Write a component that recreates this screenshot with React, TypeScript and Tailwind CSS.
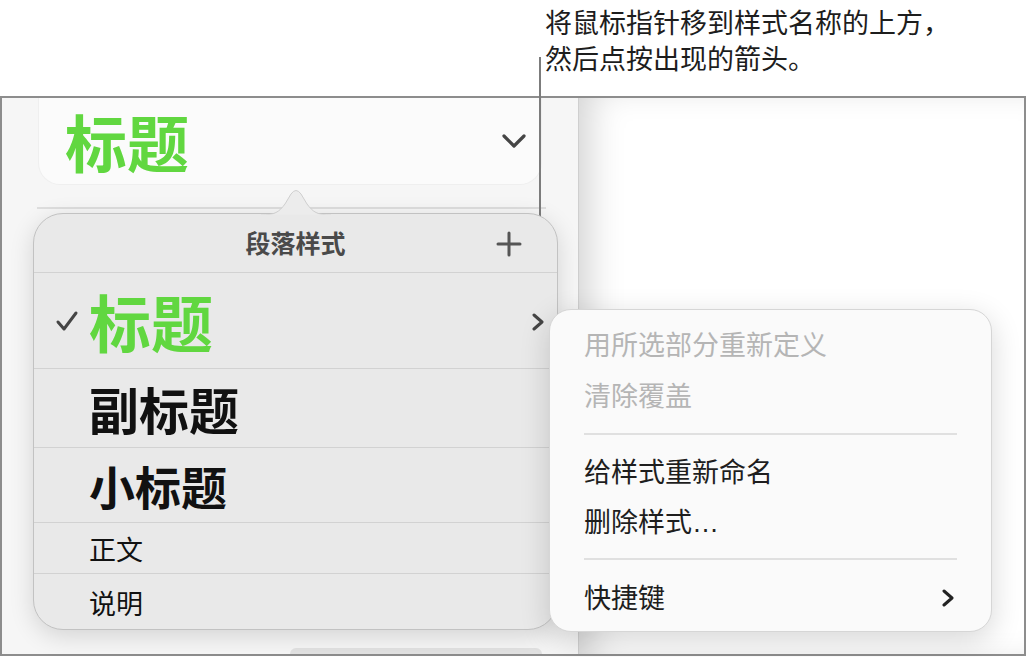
const font = "font-['Noto_Sans_CJK_SC','Noto_Sans',sans-serif]";

function ChevronDownIcon() {
  return (
    <svg width="26" height="16" viewBox="0 0 26 16" fill="none">
      <polyline points="3,3 13,13 23,3" stroke="#454545" strokeWidth="3.2" strokeLinecap="round" strokeLinejoin="round" />
    </svg>
  );
}

function ChevronRightIcon({ color = '#454545', w = 2.6 }: { color?: string; w?: number }) {
  return (
    <svg width="14" height="18" viewBox="0 0 14 18" fill="none">
      <polyline points="3,2 11,9 3,16" stroke={color} strokeWidth={w} strokeLinecap="round" strokeLinejoin="round" />
    </svg>
  );
}

function CheckIcon() {
  return (
    <svg width="24" height="22" viewBox="0 0 24 22" fill="none">
      <polyline points="3,12 9,19 21,3" stroke="#454545" strokeWidth="3" strokeLinecap="round" strokeLinejoin="round" />
    </svg>
  );
}

function PlusIcon() {
  return (
    <svg width="26" height="26" viewBox="0 0 26 26" fill="none">
      <line x1="13" y1="2" x2="13" y2="24" stroke="#555" strokeWidth="3" strokeLinecap="round" />
      <line x1="2" y1="13" x2="24" y2="13" stroke="#555" strokeWidth="3" strokeLinecap="round" />
    </svg>
  );
}

const styles = [
  { name: '副标题', cls: 'h-[79px] text-[50px] font-bold' },
  { name: '小标题', cls: 'h-[75px] text-[46px] font-bold' },
  { name: '正文', cls: 'h-[51px] text-[27px]' },
  { name: '说明', cls: 'h-[57px] text-[27px]' },
];

function MenuItem({ label, muted, chevron, ellipsis }: { label: string; muted?: boolean; chevron?: boolean; ellipsis?: boolean }) {
  return (
    <div className={`flex h-[51px] items-center justify-between pl-[34px] pr-[36px] text-[27px] ${muted ? 'text-[#b5b5b5]' : 'text-[#1e1e1e]'}`}>
      <span>
        {label}
        {ellipsis && <span className="font-['Liberation_Sans',sans-serif]">…</span>}
      </span>
      {chevron && <ChevronRightIcon color="#222" w={3} />}
    </div>
  );
}

export default function App() {
  return (
    <div className={`relative h-[657px] w-[1027px] overflow-hidden bg-white ${font}`}>
      {/* callout */}
      <div className="h-[96px] pl-[545px] pt-[4px] text-[27px] leading-[36px] text-[#1d1d1d]">
        <p>将鼠标指针移到样式名称的上方，</p>
        <p>然后点按出现的箭头。</p>
      </div>

      {/* app frame */}
      <div className="mr-[1px] flex h-[560px] overflow-hidden border-2 border-[#8d8d8d]">
        <aside className="flex w-[577px] flex-col border-r border-[#cfcfcf] bg-[#f6f6f6]">
          <div className="ml-[36px] mr-[36px] flex h-[87px] items-center justify-between rounded-b-[22px] border-x border-b border-[#efefef] bg-[#fbfbfb] pl-[26px] pr-[14px]">
            <span className="text-[62px] font-bold leading-none text-[#61d740]">标题</span>
            <ChevronDownIcon />
          </div>
          <div className="ml-[35px] mr-[32px] mt-[22px] h-[2px] bg-[#dedede]" />
          <div className="ml-[288px] mt-auto h-[6px] w-[252px] rounded-t-[8px] bg-[#e2e2e2]" />
        </aside>
        <main className="flex-1 bg-white shadow-[inset_24px_0_36px_-14px_rgba(0,0,0,0.18)]" />
      </div>

      {/* pointer line */}
      <div className="absolute left-[539px] top-[57px] h-[258px] w-[2px] bg-[#7c7c7c]" />

      {/* paragraph styles popover */}
      <div className="absolute left-[33px] top-[213px] h-[417px] w-[525px] rounded-[30px] border border-[#c2c2c2] bg-[#e9e9e9] shadow-[0_6px_24px_rgba(0,0,0,0.14)]">
        <svg className="absolute left-[227px] top-[-26px]" width="70" height="28" viewBox="0 0 70 28" fill="none">
          <path d="M0 27 C14 27 18 24 24 16 L30 6 Q35 -1 40 6 L46 16 C52 24 56 27 70 27" fill="#ececec" stroke="#cfcfcf" strokeWidth="1" />
          <rect x="0" y="26.5" width="70" height="2" fill="#e9e9e9" />
        </svg>
        <div className="relative flex h-[59px] items-center justify-center border-b border-[#d2d2d2]">
          <span className="text-[25px] font-semibold text-[#4a4a4a]">段落样式</span>
          <div className="absolute right-[35px] top-[17px]">
            <PlusIcon />
          </div>
        </div>
        <div className="flex h-[96px] items-center border-b border-[#d2d2d2] pl-[21px] pr-[12px]">
          <CheckIcon />
          <span className="ml-[10px] text-[62px] font-bold leading-none text-[#61d740]">标题</span>
          <div className="ml-auto mt-[2px]">
            <ChevronRightIcon w={3} />
          </div>
        </div>
        {styles.map((s, i) => (
          <div
            key={s.name}
            className={`flex items-center pl-[55px] leading-none text-[#111] ${s.cls} ${i < styles.length - 1 ? 'border-b border-[#d2d2d2]' : ''}`}
          >
            {s.name}
          </div>
        ))}
      </div>

      {/* style actions menu */}
      <div className="absolute left-[549px] top-[309px] h-[323px] w-[443px] rounded-[22px] border border-[#d6d6d6] bg-[#fafafa] pt-[9px] shadow-[0_8px_30px_rgba(0,0,0,0.16)]">
        <MenuItem label="用所选部分重新定义" muted />
        <MenuItem label="清除覆盖" muted />
        <div className="mx-[34px] mt-[12px] h-[2px] bg-[#e0e0e0]" />
        <div className="mt-[11px]">
          <MenuItem label="给样式重新命名" />
          <MenuItem label="删除样式" ellipsis />
        </div>
        <div className="mx-[34px] mt-[10px] h-[2px] bg-[#e0e0e0]" />
        <div className="mt-[12px]">
          <MenuItem label="快捷键" chevron />
        </div>
      </div>
    </div>
  );
}
